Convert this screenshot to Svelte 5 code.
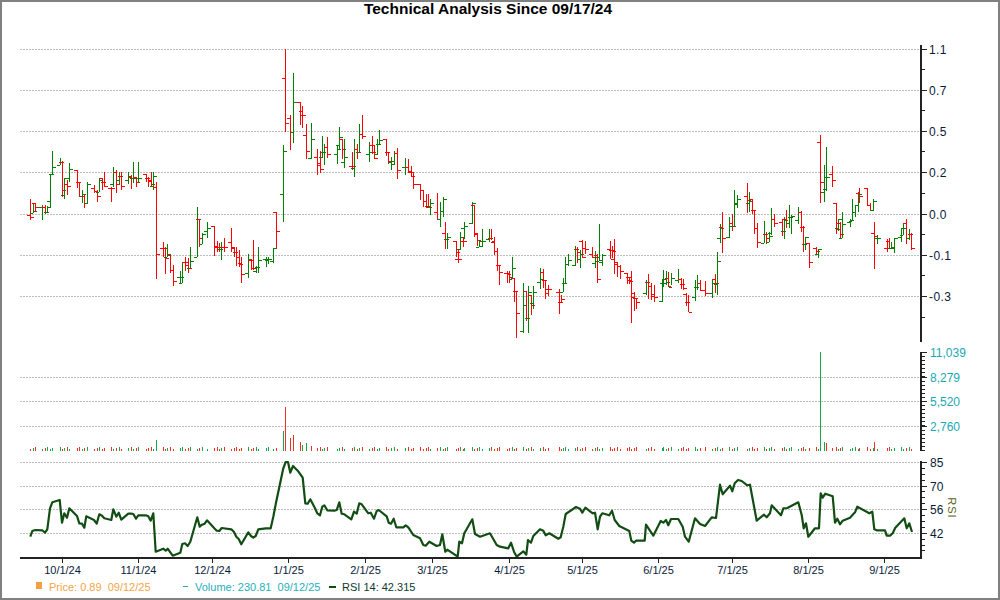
<script lang="ts">
  // [x, high, low, open, close, red]  all in page pixels
  const bars = [
    [30,199,220,215,217,1],[33,203,213,213,211,0],[35,203,212,203,207,1],
    [42,205,220,207,207,0],[45,205,214,207,212,1],[47,206,213,212,207,0],[50,174,207,201,174,0],[52,151,174,174,167,0],
    [60,158,165,165,162,0],[62,161,197,162,190,1],[64,178,199,195,178,0],[67,180,195,184,186,1],[69,163,182,178,169,0],
    [77,170,188,170,182,1],[79,182,197,182,196,1],[82,190,203,196,194,0],[84,194,208,196,203,1],[87,182,204,203,184,0],
    [94,185,193,188,191,1],[97,190,202,191,196,1],[99,178,192,192,180,0],[102,178,190,178,182,1],[104,172,187,182,186,1],
    [111,187,202,188,188,1],[113,167,187,184,172,0],[116,170,193,172,184,1],[119,172,185,180,176,0],[121,172,190,176,186,1],
    [128,172,184,180,176,0],[131,175,189,177,178,1],[133,162,183,178,177,0],[136,177,187,177,182,1],[138,162,183,178,178,0],
    [146,174,182,174,178,1],[148,177,187,178,181,1],[151,172,187,180,184,1],[153,172,190,186,176,0],[156,182,279,187,254,1],
    [163,242,257,248,248,1],[165,247,274,248,258,1],[167,244,257,257,254,0],[170,255,273,255,270,1],[173,265,286,270,281,1],
    [180,271,283,277,277,0],[182,262,283,283,262,0],[185,257,271,262,265,1],[188,258,273,262,268,1],[190,247,268,268,261,0],
    [197,207,257,257,219,0],[199,219,247,219,238,1],[202,233,244,244,234,0],[207,222,238,231,228,0],
    [214,226,256,226,247,1],[217,241,252,246,247,1],[219,243,252,247,249,1],[221,242,260,249,247,0],[224,238,252,247,247,1],
    [231,228,252,242,247,1],[234,247,257,248,252,1],[236,247,266,252,257,1],[239,250,267,257,264,1],[241,257,283,263,274,1],
    [248,254,278,273,259,0],[251,259,270,260,268,1],[253,240,270,260,268,1],[256,266,273,271,267,0],[258,247,273,267,260,0],
    [266,257,267,259,259,0],[268,257,264,260,259,0],[273,248,263,261,248,0],[276,212,248,212,231,1],
    [283,145,222,194,151,0],[285,49,132,78,123,1],[290,115,150,118,132,1],[293,73,143,132,102,0],
    [300,102,125,102,115,1],[302,106,128,111,115,1],[306,124,159,135,151,1],[311,123,159,158,139,0],
    [317,149,175,157,163,1],[320,151,173,165,169,1],[322,136,158,157,152,0],[324,144,165,152,147,0],[327,137,158,147,154,1],
    [337,145,164,154,149,0],[339,127,149,145,137,0],[342,139,159,139,149,1],[344,139,168,162,157,0],
    [352,152,170,166,166,1],[354,139,177,168,149,0],[357,144,159,149,152,1],[359,124,152,152,134,0],[362,115,139,134,136,1],
    [369,142,162,154,152,0],[372,136,154,145,152,1],[374,145,159,145,158,1],[377,139,155,154,144,0],[379,130,145,144,140,0],
    [386,139,156,139,152,1],[388,152,164,152,161,1],[391,157,170,162,161,0],[394,151,165,164,153,0],[397,148,179,153,170,1],
    [405,158,175,167,167,0],[408,159,173,167,171,1],[411,166,177,172,176,1],[413,172,189,172,184,1],
    [420,184,200,184,190,1],[423,190,207,190,201,1],[426,194,208,201,206,1],[428,194,208,206,207,1],[430,199,215,207,203,0],
    [437,193,220,212,219,1],[440,202,227,219,211,0],[443,197,217,211,199,0],[445,222,249,233,239,1],[447,233,249,239,237,0],
    [456,241,257,241,252,1],[458,250,263,259,259,1],[460,232,250,249,237,0],[463,237,247,241,241,1],[464,222,239,228,226,0],
    [472,202,224,223,203,0],[474,205,237,205,233,1],[477,233,246,234,240,1],[479,240,247,247,241,0],[482,229,247,246,241,0],
    [489,229,242,239,238,0],[491,229,240,238,241,1],[494,237,255,242,251,1],[497,248,271,251,265,1],[499,265,285,265,272,1],
    [507,271,283,273,274,1],[509,271,283,273,277,1],[512,257,279,279,268,0],[514,278,302,278,291,1],[516,291,338,291,313,1],
    [523,283,333,331,305,0],[526,291,321,291,318,1],[528,286,333,318,292,0],[531,295,315,295,305,1],[533,286,309,303,292,0],
    [540,268,289,282,279,0],[543,269,288,272,280,1],[545,280,299,280,293,1],[548,285,296,289,289,1],
    [559,289,314,292,302,1],[561,295,303,302,299,1],[563,278,292,292,283,0],[565,257,284,283,264,0],[568,254,266,264,260,0],
    [575,246,266,265,249,0],[577,247,263,249,252,1],[580,250,268,259,254,0],[582,240,258,241,257,1],[585,241,254,248,249,1],
    [592,247,258,254,257,1],[595,251,268,263,257,0],[597,254,283,255,279,1],[599,224,261,261,260,0],[602,254,266,262,255,0],
    [610,241,259,249,259,1],[612,246,258,250,251,1],[614,239,274,250,264,1],[617,262,277,262,266,1],[620,265,279,266,271,1],
    [627,273,284,273,277,1],[629,277,284,277,281,1],[631,271,323,280,297,1],[634,292,311,293,298,1],[636,298,309,298,302,1],
    [646,280,295,293,282,0],[648,274,299,282,286,1],[651,283,300,286,296,1],[654,285,302,294,297,1],
    [662,279,302,301,279,0],[663,270,287,283,283,0],[666,271,285,283,282,0],[668,272,287,278,287,1],[671,273,285,286,278,0],
    [678,269,283,280,279,0],[681,278,289,279,284,1],[683,279,290,284,288,1],[686,293,306,294,302,1],[688,295,312,302,312,1],
    [695,280,301,297,287,0],[697,275,290,287,283,0],[700,280,291,283,290,1],[705,281,296,290,293,1],
    [712,280,298,293,283,0],[715,274,293,279,283,1],[717,252,295,284,261,0],[720,224,243,238,228,0],[722,212,253,227,238,1],
    [729,217,238,237,226,0],[732,214,231,223,226,1],[734,190,227,226,203,0],[737,195,208,204,199,0],
    [747,183,213,196,200,1],[749,192,212,203,201,0],[752,199,214,199,210,1],[754,210,234,210,228,1],[757,223,248,228,242,1],
    [764,221,243,243,234,0],[766,232,244,234,238,1],[769,232,242,242,236,0],[771,208,235,233,219,0],[774,214,227,219,223,1],
    [782,219,236,222,231,1],[784,217,239,231,220,0],[786,210,228,219,223,1],[789,205,228,223,217,0],[791,215,234,217,216,0],
    [798,207,224,220,212,0],[801,211,232,212,227,1],[803,226,252,227,244,1],[805,237,250,244,237,0],[809,243,268,243,262,1],
    [816,247,254,248,251,1],[818,249,258,254,249,0],[820,135,203,142,182,1],[824,165,202,192,177,0],[826,147,191,189,177,0],
    [832,166,187,174,180,1],[836,203,234,203,229,1],[838,219,231,228,219,0],[840,222,238,223,234,1],[842,212,238,238,224,0],
    [850,219,227,222,220,0],[852,199,221,221,212,0],[855,205,217,212,205,0],[858,192,212,205,194,0],[859,188,203,193,196,1],
    [867,188,205,188,205,1],[870,203,211,205,210,1],[873,199,211,210,201,0],[874,222,269,233,236,1],[877,235,244,238,238,0],
    [887,239,252,248,248,1],[889,238,249,241,248,1],[891,242,249,248,247,0],[894,238,253,248,238,0],
    [901,228,242,237,228,0],[903,223,235,235,228,0],[906,219,244,223,238,1],[909,229,240,238,234,0],[911,233,250,234,248,1]
  ];

  // tall volume days, the rest are small
  const volTall = { 156: 440, 283: 431, 285: 407, 290: 438, 293: 435, 300: 442, 302: 445, 306: 443, 311: 446, 820: 352, 824: 442, 826: 443, 874: 442 };
  const volGreen = [156, 820, 824, 302, 306, 283];

  const rsiA = [91,410,97,393,106,390,127,391,135,398,142,388,150,325,157,307,179,300,186,368,193,340,201,353,208,325,231,348,238,370,246,371,253,383,259,349,282,360,290,371,298,343,306,347,313,355,334,360,340,328,349,350,356,338,364,359,385,341,393,341,400,342,408,356,415,346,437,346,445,349,452,362,460,340,467,455,490,446,497,452,503,446,511,457,518,467,541,458,547,432,555,430,563,438,571,425,592,352,599,380,606,374,614,371,621,361,643,385,650,392,658,393,665,384,694,388,702,396,709,410,716,417,724,433,745,397,753,408,760,413,767,408,775,388,797,385,812,385,820,350,828,308,850,205,857,186,864,186,871,218,879,198,893,212,908,233,916,310,923,311,931,298,945,325,952,340,960,346,967,320,973,316,982,331,1003,332,1010,330,1018,307,1025,341,1033,343,1054,358,1062,335,1070,341,1078,310,1085,313,1105,340,1112,338,1122,356,1130,333,1136,330,1160,349,1166,368,1173,371,1181,356,1189,382,1210,382,1217,376,1225,382,1240,405,1260,415,1270,435,1277,437,1288,425,1310,438,1320,435,1327,403,1336,455,1342,449,1373,470,1378,425,1386,430,1393,400,1417,358,1425,402,1440,410,1470,400,1490,435];
  const rsiB = [0,440,25,445,33,428,42,455,50,470,70,454,79,464,84,420,93,428,100,408,120,388,130,392,137,406,148,400,175,416,182,412,190,380,197,342,228,321,240,326,247,338,256,323,278,340,285,338,293,388,300,350,307,340,328,346,336,332,344,360,358,378,388,393,394,422,402,428,408,422,434,422,438,374,460,407,482,363,490,368,498,360,505,376,513,357,535,357,548,380,555,410,566,425,585,355,600,372,615,378,635,352,648,354,660,254,668,283,690,257,697,274,704,250,714,240,725,243,742,256,750,254,770,362,792,344,800,352,810,340,815,316,843,346,850,325,862,324,895,307,905,345,911,385,918,370,925,410,945,385,957,385,962,280,968,293,976,281,998,289,1005,368,1012,356,1020,373,1028,362,1050,353,1065,337,1072,320,1108,340,1117,335,1123,388,1130,391,1155,391,1160,407,1170,407,1178,400,1186,383,1213,355,1220,385,1228,370,1236,396];

  function toPoints(arr, ox) {
    let out = [];
    for (let i = 0; i < arr.length; i += 2) {
      out.push((ox + arr[i] / 3).toFixed(1) + "," + (400 + arr[i + 1] / 3).toFixed(1));
    }
    return out.join(" ");
  }
  const rsiLine = toPoints(rsiA, 0) + " " + toPoints(rsiB, 500);

  const priceLabels = [[49, "1.1"], [90, "0.7"], [131, "0.5"], [172, "0.2"], [214, "0.0"], [255, "-0.1"], [296, "-0.3"]];
  const volLabels = [[352, "11,039"], [377, "8,279"], [401, "5,520"], [426, "2,760"]];
  const rsiLabels = [[462, "85"], [486, "70"], [509, "56"], [533, "42"]];
  const dates = [[62, "10/1/24"], [138, "11/1/24"], [212, "12/1/24"], [288, "1/1/25"], [365, "2/1/25"], [432, "3/1/25"], [509, "4/1/25"], [582, "5/1/25"], [658, "6/1/25"], [732, "7/1/25"], [808, "8/1/25"], [884, "9/1/25"]];

  const priceMinor = [69.5, 110.5, 151.5, 193, 234.5, 275.5, 317];
  const volMinor = [];
  for (let y = 352; y <= 450; y += 4.08) volMinor.push(y);
  const rsiMinor = [];
  for (let y = 462; y <= 556; y += 5.9) rsiMinor.push(y);
</script>

<div class="frame">
  <h1>Technical Analysis Since 09/17/24</h1>

  <svg class="chart" viewBox="2 20 996 560" width="996" height="560" shape-rendering="crispEdges">
    {#each priceLabels as [y]}
      <line class="grid" x1="20" x2="921" y1={y + 0.5} y2={y + 0.5} />
    {/each}
    {#each volLabels.slice(1) as [y]}
      <line class="grid" x1="20" x2="921" y1={y + 0.5} y2={y + 0.5} />
    {/each}
    {#each rsiLabels as [y]}
      <line class="grid" x1="20" x2="921" y1={y + 0.5} y2={y + 0.5} />
    {/each}

    {#each bars as [x, hi, lo, o, c, red]}
      <g class={red ? "red" : "green"}>
        <line x1={x + 0.5} x2={x + 0.5} y1={hi} y2={lo} />
        <line x1={x - 3} x2={x} y1={o + 0.5} y2={o + 0.5} />
        <line x1={x + 1} x2={x + 4} y1={c + 0.5} y2={c + 0.5} />
      </g>
    {/each}

    {#each bars as [x, hi, lo, o, c, red], i}
      <line
        class={(volTall[x] ? volGreen.includes(x) : !red) ? "vol-green" : "vol-red"}
        x1={x + 0.5}
        x2={x + 0.5}
        y1={volTall[x] ?? 451 - (2 + (i * 7) % 3)}
        y2="451"
      />
    {/each}

    <polyline class="rsi" points={rsiLine} shape-rendering="auto" />

    <!-- axes -->
    <line class="axis" x1="921" x2="921" y1="45" y2="342" />
    <line class="axis" x1="921" x2="921" y1="352" y2="451" />
    <line class="axis" x1="921" x2="921" y1="461" y2="559" />
    <line class="axis" x1="20" x2="922" y1="558" y2="558" />

    {#each priceLabels as [y, label]}
      <line class="tick" x1="922" x2="927" y1={y + 0.5} y2={y + 0.5} />
      <text class="label price-label" x="929" y={y + 4.5}>{label}</text>
    {/each}
    {#each priceMinor as y}
      <line class="tick" x1="922" x2="925" y1={y} y2={y} />
    {/each}

    {#each volMinor as y}
      <line class="tick" x1="922" x2="925" y1={Math.round(y) + 0.5} y2={Math.round(y) + 0.5} />
    {/each}
    {#each volLabels as [y, label]}
      <line class="tick" x1="922" x2="927" y1={y + 0.5} y2={y + 0.5} />
      <text class="label vol" x="930" y={y + 4.5}>{label}</text>
    {/each}

    {#each rsiMinor as y}
      <line class="tick" x1="922" x2="925" y1={Math.round(y) + 0.5} y2={Math.round(y) + 0.5} />
    {/each}
    {#each rsiLabels as [y, label]}
      <line class="tick" x1="922" x2="927" y1={y + 0.5} y2={y + 0.5} />
      <text class="label" x="930" y={y + 4.5}>{label}</text>
    {/each}
    <text class="rsi-title" transform="translate(948 508) rotate(90)" text-anchor="middle">RSI</text>

    {#each dates as [x, label]}
      <line class="tick" x1={x + 0.5} x2={x + 0.5} y1="559" y2="563" />
      <text class="label date" x={x + 0.5} y="574" text-anchor="middle">{label}</text>
    {/each}
  </svg>

  <div class="legend">
    <span class="item price"><i class="sq"></i>Price: 0.89&nbsp; 09/12/25</span>
    <span class="item volume"><i class="dash"></i>Volume: 230.81&nbsp; 09/12/25</span>
    <span class="item rsi-key"><i class="thick"></i>RSI 14: 42.315</span>
  </div>
</div>

<style>
  :global(body) {
    margin: 0;
    background: #fff;
  }
  .frame {
    box-sizing: border-box;
    width: 1000px;
    height: 600px;
    border: 2px solid #808080;
    font-family: "Liberation Sans", Arial, sans-serif;
    display: flex;
    flex-direction: column;
    background: #fff;
    overflow: hidden;
  }
  h1 {
    flex: none;
    margin: 0;
    height: 18px;
    padding-right: 24px;
    font-size: 15.5px;
    line-height: 14px;
    text-align: center;
    color: #000;
  }
  .chart {
    display: block;
    flex: none;
  }
  .grid {
    stroke: #bdbdbd;
    stroke-width: 1;
    stroke-dasharray: 2 1;
  }
  .red line {
    stroke: #ff0000;
    stroke-width: 1;
  }
  .green line {
    stroke: #008000;
    stroke-width: 1;
  }
  .vol-red {
    stroke: #ee3322;
  }
  .vol-green {
    stroke: #1aa64b;
  }
  .rsi {
    fill: none;
    stroke: #124d14;
    stroke-width: 2.2;
    stroke-linejoin: round;
  }
  .axis {
    stroke: #222;
    stroke-width: 2;
  }
  .tick {
    stroke: #222;
    stroke-width: 1;
  }
  .label {
    font-size: 12px;
    fill: #0a1a3a;
  }
  .label.price-label {
    letter-spacing: 0.4px;
  }
  .label.vol {
    fill: #1aa8b4;
  }
  .label.date {
    font-size: 11px;
  }
  .rsi-title {
    font-size: 11px;
    letter-spacing: 1px;
    fill: #5a6420;
  }
  .legend {
    flex: none;
    height: 13px;
    display: flex;
    align-items: center;
    padding: 0 0 5px 34px;
    font-size: 11px;
    white-space: nowrap;
  }
  .item {
    display: flex;
    align-items: center;
  }
  .price {
    color: #f5a545;
    width: 147px;
  }
  .volume {
    color: #1fb0ba;
    width: 146px;
  }
  .rsi-key {
    color: #0d3b30;
  }
  .sq {
    width: 6px;
    height: 7px;
    background: #f5a040;
    margin-right: 7px;
    margin-top: -2px;
  }
  .dash {
    width: 5px;
    height: 1px;
    background: #1fb0ba;
    margin-right: 7px;
  }
  .thick {
    width: 7px;
    height: 2px;
    background: #124d14;
    margin-right: 6px;
  }
</style>
